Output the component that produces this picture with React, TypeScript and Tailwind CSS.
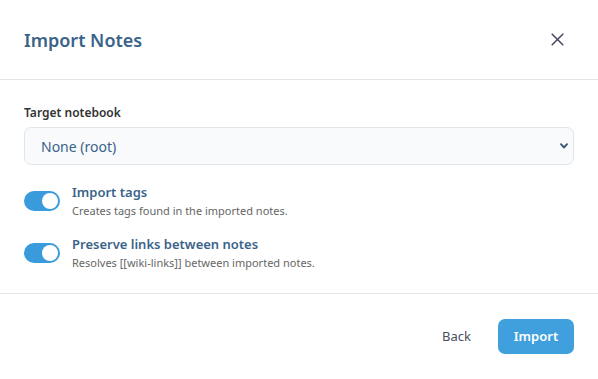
import React from "react";

function Toggle() {
  return (
    <div className="relative h-[20px] w-[36px] shrink-0 rounded-full bg-[#3a9bdc]">
      <div className="absolute right-[2px] top-[2px] h-[16px] w-[16px] rounded-full bg-white" />
    </div>
  );
}

function Row({ title, desc }: { title: string; desc: string }) {
  return (
    <div className="flex items-center gap-[12px]">
      <Toggle />
      <div className="flex flex-col">
        <span className="text-[13px] font-semibold leading-[20px] text-[#3b6389]">{title}</span>
        <span className="text-[11px] leading-[18px] text-[#666]">{desc}</span>
      </div>
    </div>
  );
}

export default function App() {
  return (
    <div
      className="flex h-[379px] w-[598px] flex-col bg-white"
      style={{ fontFamily: '"Noto Sans", "Open Sans", sans-serif' }}
    >
      <div className="flex h-[80px] items-center justify-between border-b border-[#e3e7eb] pl-[24px] pr-[34px]">
        <h1 className="mt-[2px] text-[18px] font-semibold text-[#3b6389]">Import Notes</h1>
        <svg width="13" height="13" viewBox="0 0 13 13" className="text-[#4a4d66]">
          <path d="M1.2 1.2 L11.8 11.8 M11.8 1.2 L1.2 11.8" stroke="currentColor" strokeWidth="1.6" strokeLinecap="round" />
        </svg>
      </div>
      <div className="flex h-[214px] flex-col border-b border-[#e3e7eb] px-[24px] pt-[24px]">
        <label className="text-[12px] font-semibold leading-[18px] text-[#333]">Target notebook</label>
        <div className="mt-[5px] flex h-[38px] items-center justify-between rounded-[7px] border border-[#e2e6ea] bg-[#f8fafc] pl-[16px] pr-[5px]">
          <span className="text-[14px] text-[#3b6389]">None (root)</span>
          <svg width="8" height="6" viewBox="0 0 8 6">
            <path d="M1 1.2 L4 4.5 L7 1.2" stroke="#3b5a78" strokeWidth="1.9" fill="none" strokeLinecap="round" strokeLinejoin="round" />
          </svg>
        </div>
        <div className="mt-[17px] flex flex-col gap-[14px]">
          <Row title="Import tags" desc="Creates tags found in the imported notes." />
          <Row title="Preserve links between notes" desc="Resolves [[wiki-links]] between imported notes." />
        </div>
      </div>
      <div className="flex items-center justify-end gap-[12px] px-[24px] pt-[25px]">
        <button className="h-[35px] px-[15px] text-[13px] text-[#4a4d5e]">Back</button>
        <button className="h-[35px] w-[76px] rounded-[7px] bg-[#3fa0dd] text-[13px] font-semibold text-white">Import</button>
      </div>
    </div>
  );
}
